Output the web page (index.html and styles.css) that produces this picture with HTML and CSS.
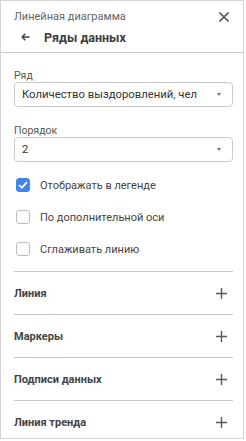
FILE: index.html
```html
<!DOCTYPE html>
<html>
<head>
    <title>Ряды данных</title>
    <link rel="stylesheet" href="styles.css">
</head>
<body>
    <div class="panel">
        <div class="panel-header">
            <div class="header-top">
                <span class="chart-name">Линейная диаграмма</span>
                <svg class="close-icon" width="10" height="10" viewBox="0 0 10 10">
                    <path d="M0.5 0.5 L9.5 9.5 M9.5 0.5 L0.5 9.5" stroke="#5a5a5a" stroke-width="1.6" fill="none"/>
                </svg>
            </div>
            <div class="header-title">
                <svg class="back-icon" width="9" height="8" viewBox="0 0 9 8">
                    <path d="M8.5 4 H1.2 M4.2 0.8 L1.2 4 L4.2 7.2" stroke="#444" stroke-width="1.5" fill="none"/>
                </svg>
                <span>Ряды данных</span>
            </div>
        </div>

        <div class="panel-body">
            <div class="field">
                <div class="field-label">Ряд</div>
                <div class="select">
                    <span>Количество выздоровлений, чел</span>
                    <span class="caret"></span>
                </div>
            </div>
            <div class="field">
                <div class="field-label">Порядок</div>
                <div class="select">
                    <span>2</span>
                    <span class="caret"></span>
                </div>
            </div>

            <div class="checks">
                <label class="check">
                    <span class="box checked">
                        <svg width="10" height="8" viewBox="0 0 10 8">
                            <path d="M1 4 L3.8 6.7 L9 1.2" stroke="#fff" stroke-width="1.7" fill="none"/>
                        </svg>
                    </span>
                    Отображать в легенде
                </label>
                <label class="check">
                    <span class="box"></span>
                    По дополнительной оси
                </label>
                <label class="check">
                    <span class="box"></span>
                    Сглаживать линию
                </label>
            </div>

            <div class="section">
                <span>Линия</span>
                <svg class="plus" width="11" height="11" viewBox="0 0 11 11">
                    <path d="M0 5.5 H11 M5.5 0 V11" stroke="#5a5a5a" stroke-width="1.4"/>
                </svg>
            </div>
            <div class="section">
                <span>Маркеры</span>
                <svg class="plus" width="11" height="11" viewBox="0 0 11 11">
                    <path d="M0 5.5 H11 M5.5 0 V11" stroke="#5a5a5a" stroke-width="1.4"/>
                </svg>
            </div>
            <div class="section">
                <span>Подписи данных</span>
                <svg class="plus" width="11" height="11" viewBox="0 0 11 11">
                    <path d="M0 5.5 H11 M5.5 0 V11" stroke="#5a5a5a" stroke-width="1.4"/>
                </svg>
            </div>
            <div class="section">
                <span>Линия тренда</span>
                <svg class="plus" width="11" height="11" viewBox="0 0 11 11">
                    <path d="M0 5.5 H11 M5.5 0 V11" stroke="#5a5a5a" stroke-width="1.4"/>
                </svg>
            </div>
        </div>
    </div>
</body>
</html>
```

FILE: styles.css
```css
html, body {
    margin: 0;
    background-color: #ffffff;
    font-family: Roboto, "Liberation Sans", sans-serif;
    color: #333333;
}

.panel {
    width: 244px;
    height: 439px;
    box-sizing: border-box;
    border: 1px solid #d4d4d4;
    display: flex;
    flex-direction: column;
}

/* Header */
.panel-header {
    height: 52px;
    flex-shrink: 0;
    box-sizing: border-box;
    border-bottom: 1px solid #c8c8c8;
    padding: 8px 14px 0 13px;
}

.header-top {
    display: flex;
    justify-content: space-between;
    align-items: center;
    height: 15px;
}

.chart-name {
    font-size: 11px;
    color: #666666;
}

.header-title {
    display: flex;
    align-items: center;
    margin-top: 2px;
    height: 22px;
    font-size: 12.5px;
    font-weight: bold;
    color: #3c3c3c;
}

.back-icon {
    margin-left: 7px;
    margin-right: 14px;
}

/* Body */
.panel-body {
    padding: 0 10px 0 13px;
}

.field {
    margin-top: 16px;
}

.field + .field {
    margin-top: 17px;
}

.field-label {
    height: 13px;
    line-height: 13px;
    font-size: 10.5px;
    color: #555555;
}

.select {
    height: 25px;
    box-sizing: border-box;
    border: 1px solid #cccccc;
    border-radius: 4px;
    display: flex;
    align-items: center;
    justify-content: space-between;
    padding: 0 11px 0 7px;
    font-size: 11.3px;
    color: #333333;
    white-space: nowrap;
}

.caret {
    width: 0;
    height: 0;
    border-left: 2.5px solid transparent;
    border-right: 2.5px solid transparent;
    border-top: 3px solid #707070;
}

.checks {
    padding-top: 7px;
    padding-bottom: 6px;
    border-bottom: 1px solid #c8c8c8;
}

.check {
    display: flex;
    align-items: center;
    height: 32px;
    font-size: 11px;
    color: #444444;
}

.box {
    width: 14px;
    height: 14px;
    box-sizing: border-box;
    border: 1px solid #bdbdbd;
    border-radius: 3px;
    margin-left: 2px;
    margin-right: 10px;
    display: flex;
    align-items: center;
    justify-content: center;
}

.box.checked {
    background-color: #3f86e8;
    border-color: #3f86e8;
}

.section {
    height: 43px;
    box-sizing: border-box;
    border-bottom: 1px solid #c8c8c8;
    display: flex;
    align-items: center;
    justify-content: space-between;
    font-size: 11px;
    font-weight: bold;
    color: #444444;
}

.section:last-child {
    border-bottom: none;
}

.plus {
    margin-right: 6px;
}
```
